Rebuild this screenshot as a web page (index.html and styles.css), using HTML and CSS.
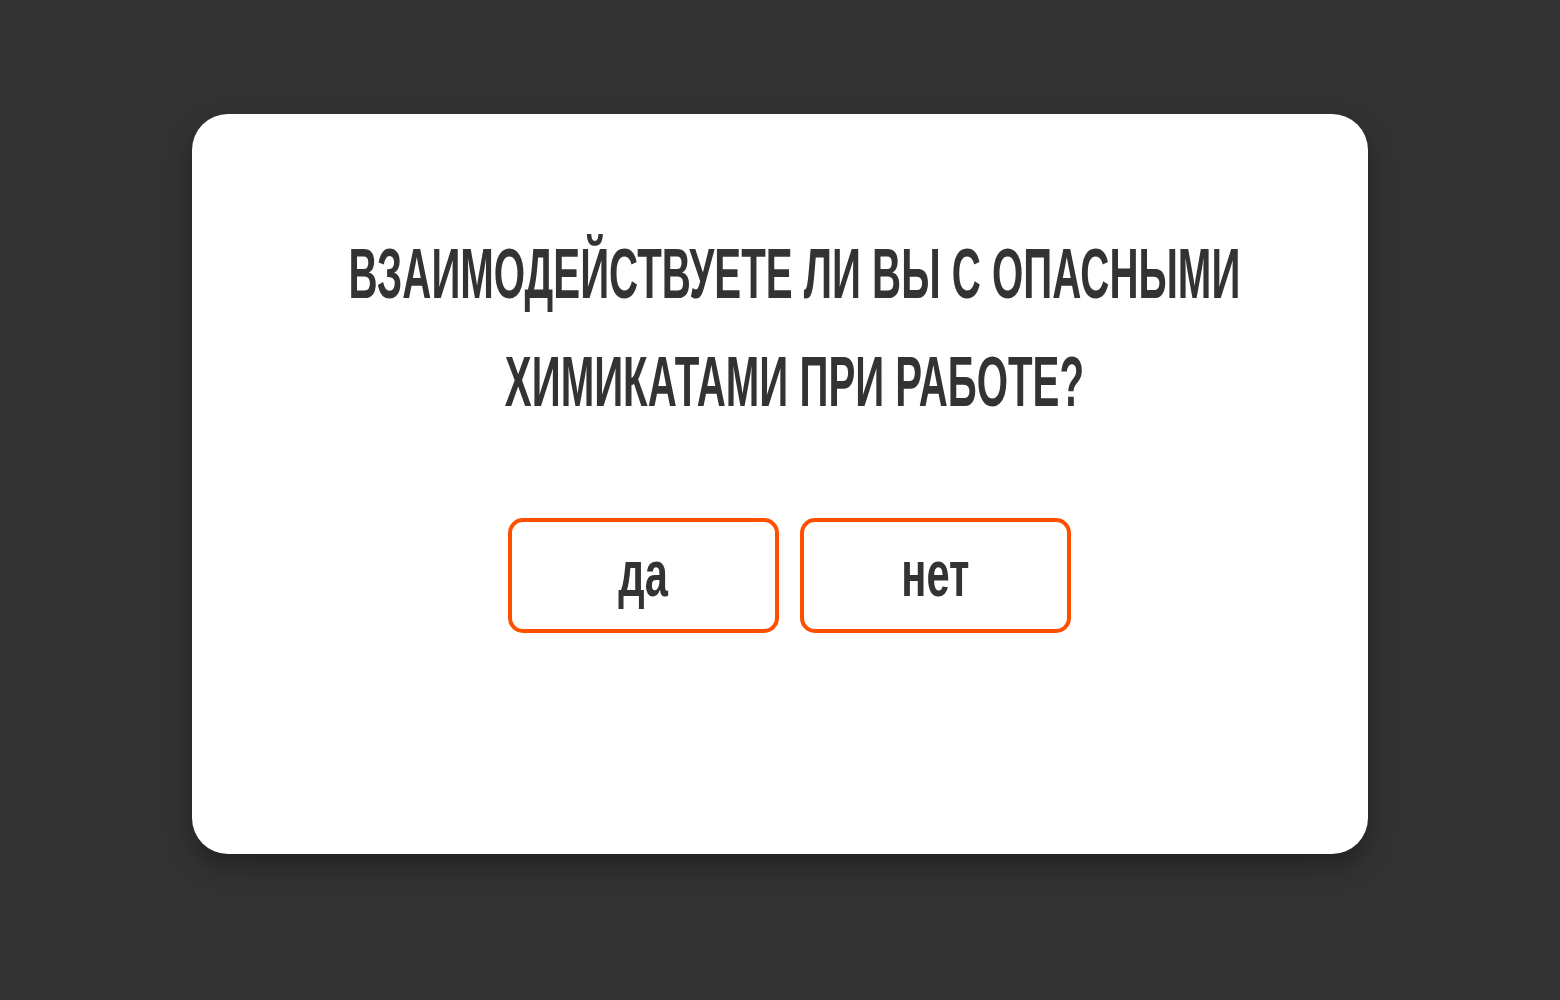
FILE: index.html
```html
<!DOCTYPE html>
<html lang="ru">
<head>
<meta charset="utf-8">
<title>Вопрос</title>
<link rel="stylesheet" href="styles.css">
</head>
<body>
<div class="page">
  <div class="card">
    <h1 class="question"><span class="q-text">ВЗАИМОДЕЙСТВУЕТЕ ЛИ ВЫ С ОПАСНЫМИ<br>ХИМИКАТАМИ ПРИ РАБОТЕ?</span></h1>
    <div class="answers">
      <button class="answer"><span class="a-text">да</span></button>
      <button class="answer"><span class="a-text">нет</span></button>
    </div>
  </div>
</div>
</body>
</html>
```
FILE: styles.css
```css
html, body {
  margin: 0;
  padding: 0;
  background: #333333;
}
.page {
  width: 1560px;
  height: 1000px;
  display: flex;
  justify-content: center;
  padding-top: 114px;
  box-sizing: border-box;
}
.card {
  width: 1176px;
  height: 740px;
  box-sizing: border-box;
  background: #ffffff;
  border-radius: 36px;
  box-shadow: 0 12px 28px rgba(0, 0, 0, 0.35);
  display: flex;
  flex-direction: column;
  align-items: center;
  padding-top: 106px;
  padding-left: 19px;
}
.question {
  margin: 0;
  padding-left: 9px;
  font-family: "Liberation Sans", Arial, sans-serif;
  font-weight: 700;
  font-size: 70px;
  line-height: 108px;
  color: #333333;
  text-align: center;
  white-space: nowrap;
}
.q-text {
  display: inline-block;
  transform: scaleX(0.575);
  transform-origin: center;
}
.answers {
  margin-top: 82px;
  display: flex;
  gap: 21px;
}
.answer {
  width: 271px;
  height: 115px;
  box-sizing: border-box;
  border: 4px solid #ff5000;
  border-radius: 15px;
  background: #ffffff;
  display: flex;
  align-items: center;
  justify-content: center;
  padding: 0 0 4px 0;
  font-family: "Liberation Sans", Arial, sans-serif;
  font-weight: 700;
  font-size: 64px;
  color: #333333;
  cursor: pointer;
}
.a-text {
  display: inline-block;
  transform: scaleX(0.65);
}
```
